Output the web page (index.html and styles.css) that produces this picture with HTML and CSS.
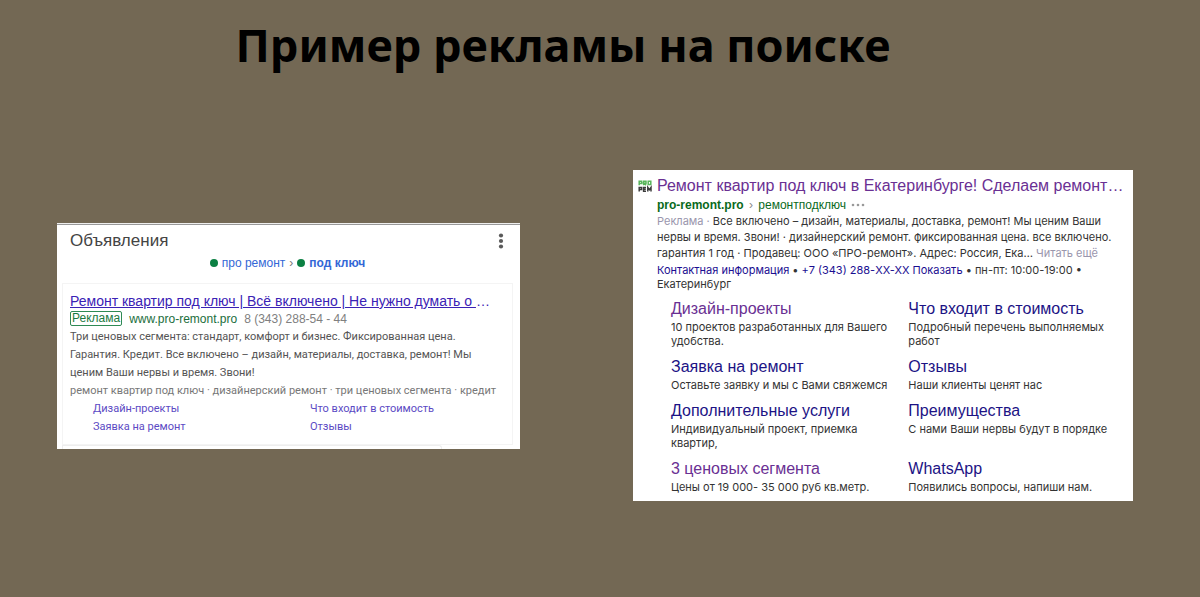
FILE: index.html
```html
<!DOCTYPE html>
<html lang="ru">
<head>
<meta charset="utf-8">
<meta name="viewport" content="width=device-width, initial-scale=1">
<title>Пример рекламы на поиске</title>
<link rel="stylesheet" href="styles.css">
</head>
<body>
<main class="slide">
  <h1 class="slide-title">Пример рекламы на поиске</h1>
  <div class="examples">
    <section class="card ads">
      <header class="ads-header">
        <h2 class="ads-heading">Объявления</h2>
        <button class="menu" type="button" aria-label="Меню">
          <svg width="6" height="16" viewBox="0 0 6 16" fill="#5a5a5a"><circle cx="3" cy="2.5" r="2.1"/><circle cx="3" cy="8" r="2.1"/><circle cx="3" cy="13.5" r="2.1"/></svg>
        </button>
      </header>
      <nav class="trail">
        <i class="dot"></i><a href="#">про ремонт</a><span class="sep">›</span><i class="dot"></i><a class="current" href="#">под ключ</a>
      </nav>
      <article class="ad">
        <a class="ad-title" href="#"><span class="ad-title-text">Ремонт квартир под ключ | Всё включено | Не нужно думать о </span>…</a>
        <p class="ad-source"><span class="badge">Реклама</span><a class="ad-url" href="#">www.pro-remont.pro</a><span class="phone">8 (343) 288-54 - 44</span></p>
        <p class="ad-text">Три ценовых сегмента: стандарт, комфорт и бизнес. Фиксированная цена.<br>Гарантия. Кредит. Все включено – дизайн, материалы, доставка, ремонт! Мы<br>ценим Ваши нервы и время. Звони!</p>
        <p class="ad-tags">ремонт квартир под ключ · дизайнерский ремонт · три ценовых сегмента · кредит</p>
        <div class="ad-links">
          <a href="#">Дизайн-проекты</a><a href="#">Что входит в стоимость</a>
          <a href="#">Заявка на ремонт</a><a href="#">Отзывы</a>
        </div>
      </article>
      <div class="next-ad"></div>
    </section>

    <section class="card result">
      <svg class="favicon" width="14" height="12" viewBox="0 0 14 12" fill="none" stroke-width="1.5" aria-hidden="true">
        <path stroke="#58b45a" d="M1.2 5.2V1.2H3.6V3.4H1.2M5.6 5.2V1.2H8V3.2H5.6L8.2 5.2M10.2 1.2H12.8V4.6H10.2Z"/>
        <path stroke="#3c3c3c" d="M1.2 11.6V7.4H3.6V9.6H1.2M8 7.4H5.6V11.2H8M5.6 9.3H7.8M9.8 11.6V7.4L11.4 9.6L13 7.4V11.6"/>
      </svg>
      <div class="result-body">
        <a class="result-title" href="#">Ремонт квартир под ключ в Екатеринбурге! Сделаем ремонт…</a>
        <p class="result-path"><a href="#"><b>pro-remont.pro</b> <span class="arrow">›</span> ремонтподключ</a>
          <button class="more" type="button" aria-label="Ещё"><svg width="14" height="4" viewBox="0 0 14 4" fill="#999"><circle cx="2" cy="2" r="1.3"/><circle cx="7" cy="2" r="1.3"/><circle cx="12" cy="2" r="1.3"/></svg></button></p>
        <p class="result-text"><span class="muted">Реклама ·</span> Все включено – дизайн, материалы, доставка, ремонт! Мы ценим Ваши<br>нервы и время. Звони! · дизайнерский ремонт. фиксированная цена. все включено.<br>гарантия 1 год · Продавец: ООО «ПРО-ремонт». Адрес: Россия, Ека… <a class="muted" href="#">Читать ещё</a></p>
        <p class="contacts"><a href="#">Контактная информация</a> <span class="bullet">•</span> <a href="#">+7 (343) 288-XX-XX Показать</a> <span class="bullet">•</span> пн-пт: 10:00-19:00 <span class="bullet">•</span><br>Екатеринбург</p>
        <div class="sitelinks">
          <div><a class="visited" href="#">Дизайн-проекты</a><p>10 проектов разработанных для Вашего<br>удобства.</p></div>
          <div><a href="#">Что входит в стоимость</a><p>Подробный перечень выполняемых<br>работ</p></div>
          <div><a href="#">Заявка на ремонт</a><p>Оставьте заявку и мы с Вами свяжемся</p></div>
          <div><a href="#">Отзывы</a><p>Наши клиенты ценят нас</p></div>
          <div><a href="#">Дополнительные услуги</a><p>Индивидуальный проект, приемка<br>квартир,</p></div>
          <div><a href="#">Преимущества</a><p>С нами Ваши нервы будут в порядке</p></div>
          <div><a class="visited" href="#">3 ценовых сегмента</a><p>Цены от 19 000- 35 000 руб кв.метр.</p></div>
          <div><a href="#">WhatsApp</a><p>Появились вопросы, напиши нам.</p></div>
        </div>
      </div>
    </section>
  </div>
</main>
</body>
</html>
```
FILE: styles.css
```css
* { box-sizing: border-box; }
body {
  margin: 0;
  background: #736854;
  font-family: "Liberation Sans", Arial, sans-serif;
}
h1, h2, p { margin: 0; }
a { text-decoration: none; }
button { padding: 0; border: 0; background: none; cursor: pointer; }
svg { display: block; }

.slide { padding: 15px 67px 40px 57px; }
.slide-title {
  padding-right: 64px;
  color: #000;
  font: 700 45px/60px "Noto Sans", sans-serif;
  text-align: center;
}
.examples {
  display: grid;
  grid-template-columns: minmax(0, 463fr) minmax(0, 500fr);
  align-items: center;
  gap: 113px;
  margin-top: 95px;
}
.card { background: #fff; white-space: nowrap; }

.ads { padding: 0 7px 0 5px; border-top: 1px solid #eee; box-shadow: inset 0 1px 0 #999; }
.ads-header {
  display: flex;
  align-items: center;
  justify-content: space-between;
  padding: 6px 9px 0 8px;
}
.ads-heading { color: #444; font-size: 17px; font-weight: 400; line-height: 22px; }
.trail {
  display: flex;
  align-items: center;
  justify-content: center;
  padding-top: 3px;
  font-size: 12px;
  line-height: 16px;
}
.trail a { color: #3367d6; }
.trail .current { font-weight: 700; }
.sep { margin: 0 4px; color: #777; }
.dot { width: 8px; height: 8px; margin-right: 4px; border-radius: 50%; background: #0b8043; }

.ad {
  margin-top: 12px;
  padding: 8px 7px;
  border: 1px solid #f4f4f4;
  font-size: 12px;
  line-height: 18px;
}
.ad-title { display: block; color: #3a22b5; font-size: 14px; }
.ad-title-text { text-decoration: underline; white-space: pre; }
.ad-source { display: flex; align-items: center; gap: 7px; }
.badge {
  padding: 0 1px;
  border: 1px solid #2f8a55;
  border-radius: 2px;
  color: #1b7a43;
  line-height: 13px;
}
.ad-url { color: #1b6e3c; }
.phone { color: #808080; }
.ad-text, .ad-tags, .ad-links { font-family: Roboto, Arial, sans-serif; font-size: 11px; }
.ad-text { color: #545454; }
.ad-tags { color: #777; }
.ad-links { display: grid; grid-template-columns: 217fr 195fr; padding-left: 23px; }
.ad-links a { color: #5b4ac4; }
.next-ad { width: 380px; height: 4px; border: 1px solid #eee; border-bottom: 0; border-radius: 0 3px 0 0; }

.result { display: flex; gap: 5px; padding: 5px 12px 7px 5px; }
.favicon { margin-top: 5px; flex: none; }
.result-body { flex: 1; color: #333; font-size: 11px; }
.result-title { display: block; color: #6a3093; font-size: 16px; line-height: 22px; }
.result-path { display: flex; align-items: center; gap: 5px; font-size: 12px; line-height: 16px; }
.result-path a { color: #0a6a1c; }
.arrow { margin: 0 2px; color: #888; }
.result-text, .contacts, .sitelinks p { font-family: Inter, Arial, sans-serif; }
.result-text { line-height: 16px; }
.muted { color: #9a96ad; }
.contacts { padding-top: 2px; line-height: 14px; }
.contacts a { color: #1a0e91; }
.bullet { margin: 0; }
.sitelinks {
  display: grid;
  grid-template-columns: 235fr 213fr;
  row-gap: 8px;
  padding: 7px 0 0 14px;
}
.sitelinks a { display: block; color: #1c1385; font-size: 16px; line-height: 22px; }
.sitelinks .visited { color: #6a3093; }
.sitelinks p { line-height: 14px; }
```
